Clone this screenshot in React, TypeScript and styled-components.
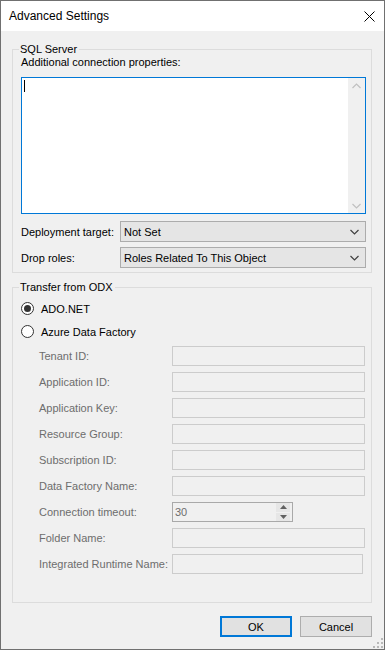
import { ReactNode } from "react";
import styled, { createGlobalStyle } from "styled-components";

const GlobalStyle = createGlobalStyle`
  html, body {
    margin: 0;
    padding: 0;
    background: #ffffff;
  }
  * {
    box-sizing: border-box;
  }
`;

const Window = styled.div`
  width: 385px;
  height: 650px;
  border: 1px solid #707070;
  display: flex;
  flex-direction: column;
  font-family: "Liberation Sans", Arial, sans-serif;
  font-size: 11px;
  color: #000000;
`;

const TitleBar = styled.div`
  height: 30px;
  flex: none;
  background: #ffffff;
  display: flex;
  align-items: center;
  justify-content: space-between;
  padding: 0 9px 0 8px;
`;

const Title = styled.span`
  font-size: 12px;
  color: #000000;
`;

const Body = styled.div`
  flex: 1;
  background: #f0f0f0;
  padding: 12px 0 0 11px;
  display: flex;
  flex-direction: column;
`;

const Group = styled.fieldset<{ $gap?: number; $top?: number }>`
  width: 360px;
  margin: 0;
  margin-top: ${(p) => p.$gap ?? 0}px;
  padding: ${(p) => p.$top ?? 0}px 5px 4px 8px;
  border: 1px solid #dcdcdc;
  min-width: 0;
`;

const Legend = styled.legend`
  padding: 0 2px 0 1px;
  margin-left: -2px;
  line-height: 13px;
  font-size: 11px;
`;

const Caption = styled.div`
  line-height: 13px;
`;

const TextArea = styled.div`
  margin-top: 8px;
  width: 345px;
  height: 137px;
  background: #ffffff;
  border: 1px solid #0078d7;
  display: flex;
  justify-content: space-between;
`;

const Caret = styled.div`
  width: 1px;
  height: 12px;
  background: #000000;
  margin: 2px 0 0 2px;
`;

const ScrollBar = styled.div`
  width: 17px;
  background: #f0f0f0;
  display: flex;
  flex-direction: column;
  justify-content: space-between;
  align-items: center;
  padding: 5px 0 4px;
`;

const FormRow = styled.div<{ $gap: number; $label: number }>`
  display: grid;
  grid-template-columns: ${(p) => p.$label}px auto;
  align-items: center;
  margin-top: ${(p) => p.$gap}px;
`;

const Label = styled.span<{ $disabled?: boolean }>`
  color: ${(p) => (p.$disabled ? "#6d6d6d" : "#000000")};
  white-space: nowrap;
`;

const Select = styled.div`
  width: 246px;
  height: 21px;
  background: #e5e5e5;
  border: 1px solid #acacac;
  display: flex;
  align-items: center;
  justify-content: space-between;
  padding: 0 6px 0 3px;
`;

const RadioRow = styled.div`
  height: 23px;
  display: flex;
  align-items: center;
  gap: 7px;
`;

const RadioCircle = styled.span<{ $checked?: boolean }>`
  width: 13px;
  height: 13px;
  border-radius: 50%;
  border: 1px solid #333333;
  background: #ffffff;
  display: flex;
  align-items: center;
  justify-content: center;
  &::after {
    content: "";
    width: 7px;
    height: 7px;
    border-radius: 50%;
    background: ${(p) => (p.$checked ? "#333333" : "transparent")};
  }
`;

const Fields = styled.div`
  padding: 3px 0 24px 18px;
  display: flex;
  flex-direction: column;
  gap: 6px;
`;

const Field = styled.div`
  display: grid;
  grid-template-columns: 133px auto;
  align-items: center;
`;

const TextBox = styled.div<{ $width?: number; $dark?: boolean }>`
  width: ${(p) => p.$width ?? 193}px;
  height: 20px;
  background: #f0f0f0;
  border: 1px solid ${(p) => (p.$dark ? "#a9a9a9" : "#cccccc")};
  display: flex;
  align-items: center;
  justify-content: space-between;
  padding: 0 0 0 2px;
  color: #6d6d6d;
`;

const Spinner = styled.div`
  width: 14px;
  height: 18px;
  display: flex;
  flex-direction: column;
  gap: 1px;
  margin-right: 2px;
`;

const SpinButton = styled.div`
  flex: 1;
  background: #e6e6e6;
  display: flex;
  align-items: center;
  justify-content: center;
`;

const Footer = styled.div`
  display: flex;
  justify-content: flex-end;
  gap: 8px;
  padding: 13px 12px 0 0;
`;

const Button = styled.div<{ $primary?: boolean }>`
  width: 72px;
  height: 21px;
  background: #e1e1e1;
  border: ${(p) => (p.$primary ? "2px solid #0078d7" : "1px solid #adadad")};
  display: flex;
  align-items: center;
  justify-content: center;
`;

const Grip = styled.div`
  display: flex;
  justify-content: flex-end;
  margin-top: auto;
  padding: 0 1px 1px 0;
`;

const Chevron = ({ up, color }: { up?: boolean; color: string }) => (
  <svg width="9" height="6" viewBox="0 0 9 6">
    <path
      d={up ? "M0.5 5 L4.5 1 L8.5 5" : "M0.5 1 L4.5 5 L8.5 1"}
      fill="none"
      stroke={color}
      strokeWidth="1.2"
    />
  </svg>
);

const Triangle = ({ up }: { up?: boolean }) => (
  <svg width="7" height="4" viewBox="0 0 7 4">
    <path d={up ? "M0 4 L3.5 0 L7 4 Z" : "M0 0 L3.5 4 L7 0 Z"} fill="#606060" />
  </svg>
);

const Radio = ({ checked, children }: { checked?: boolean; children: ReactNode }) => (
  <RadioRow>
    <RadioCircle $checked={checked} />
    <span>{children}</span>
  </RadioRow>
);

const odxFields = [
  "Tenant ID:",
  "Application ID:",
  "Application Key:",
  "Resource Group:",
  "Subscription ID:",
  "Data Factory Name:",
];

export default function App() {
  return (
    <>
      <GlobalStyle />
      <Window>
        <TitleBar>
          <Title>Advanced Settings</Title>
          <svg width="11" height="11" viewBox="0 0 11 11">
            <path d="M0.5 0.5 L10.5 10.5 M10.5 0.5 L0.5 10.5" stroke="#000" strokeWidth="1" />
          </svg>
        </TitleBar>
        <Body>
          <Group>
            <Legend>SQL Server</Legend>
            <Caption>Additional connection properties:</Caption>
            <TextArea>
              <Caret />
              <ScrollBar>
                <Chevron up color="#c0c0c0" />
                <Chevron color="#c0c0c0" />
              </ScrollBar>
            </TextArea>
            <FormRow $gap={7} $label={99}>
              <Label>Deployment target:</Label>
              <Select>
                <span>Not Set</span>
                <Chevron color="#404040" />
              </Select>
            </FormRow>
            <FormRow $gap={5} $label={99}>
              <Label>Drop roles:</Label>
              <Select>
                <span>Roles Related To This Object</span>
                <Chevron color="#404040" />
              </Select>
            </FormRow>
          </Group>

          <Group $gap={8} $top={3}>
            <Legend>Transfer from ODX</Legend>
            <Radio checked>ADO.NET</Radio>
            <Radio>Azure Data Factory</Radio>
            <Fields>
              {odxFields.map((name) => (
                <Field key={name}>
                  <Label $disabled>{name}</Label>
                  <TextBox />
                </Field>
              ))}
              <Field>
                <Label $disabled>Connection timeout:</Label>
                <TextBox $width={121} $dark>
                  <span>30</span>
                  <Spinner>
                    <SpinButton>
                      <Triangle up />
                    </SpinButton>
                    <SpinButton>
                      <Triangle />
                    </SpinButton>
                  </Spinner>
                </TextBox>
              </Field>
              <Field>
                <Label $disabled>Folder Name:</Label>
                <TextBox />
              </Field>
              <Field>
                <Label $disabled>Integrated Runtime Name:</Label>
                <TextBox $width={191} />
              </Field>
            </Fields>
          </Group>

          <Footer>
            <Button $primary>OK</Button>
            <Button>Cancel</Button>
          </Footer>
          <Grip>
            <svg width="10" height="10" viewBox="0 0 10 10" fill="#b8b8b8">
              <rect x="8" y="0" width="2" height="2" />
              <rect x="4" y="4" width="2" height="2" />
              <rect x="8" y="4" width="2" height="2" />
              <rect x="0" y="8" width="2" height="2" />
              <rect x="4" y="8" width="2" height="2" />
              <rect x="8" y="8" width="2" height="2" />
            </svg>
          </Grip>
        </Body>
      </Window>
    </>
  );
}
